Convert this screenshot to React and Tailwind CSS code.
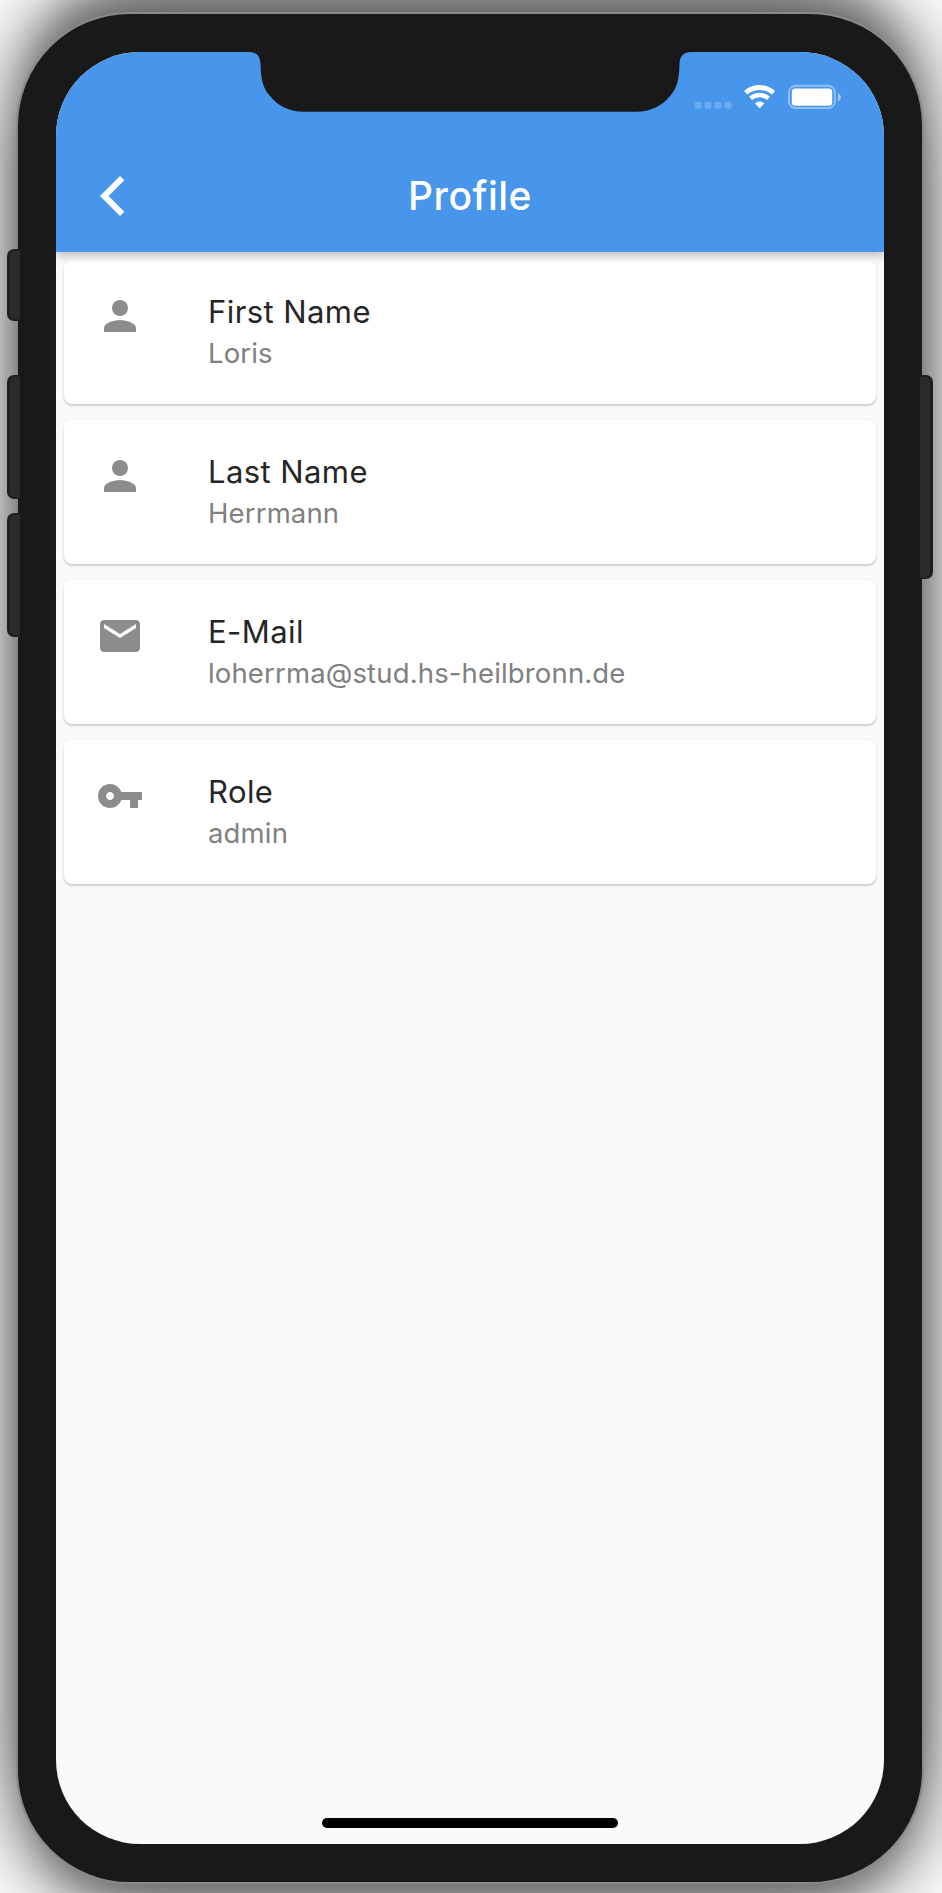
import React from "react";

const rows = [
  { icon: "person", title: "First Name", value: "Loris" },
  { icon: "person", title: "Last Name", value: "Herrmann" },
  { icon: "mail", title: "E-Mail", value: "loherrma@stud.hs-heilbronn.de" },
  { icon: "key", title: "Role", value: "admin" },
];

const paths = {
  person:
    "M12 12c2.21 0 4-1.79 4-4s-1.79-4-4-4-4 1.79-4 4 1.79 4 4 4zm0 2c-2.67 0-8 1.34-8 4v2h16v-2c0-2.66-5.33-4-8-4z",
  mail: "M20 4H4c-1.1 0-1.99.9-1.99 2L2 18c0 1.1.9 2 2 2h16c1.1 0 2-.9 2-2V6c0-1.1-.9-2-2-2zm0 4l-8 5-8-5V6l8 5 8-5v2z",
  key: "M12.65 10C11.83 7.67 9.61 6 7 6c-3.31 0-6 2.69-6 6s2.69 6 6 6c2.61 0 4.83-1.67 5.65-4H17v4h4v-4h2v-4H12.65zM7 14c-1.1 0-2-.9-2-2s.9-2 2-2 2 .9 2 2-.9 2-2 2z",
};

function Row({ icon, title, value }) {
  return (
    <li className="flex h-36 gap-16 rounded-lg bg-white pl-8 pt-8 shadow-[0_2px_2px_rgba(0,0,0,0.16),0_0_2px_rgba(0,0,0,0.10)]">
      <svg viewBox="0 0 24 24" className="h-12 w-12 fill-[#8c8c8c]">
        <path d={paths[icon]} />
      </svg>
      <div className="-mt-px flex flex-col">
        <span className="text-[31px] leading-[42px] tracking-[0.42px] text-[#262626]">{title}</span>
        <span className="text-[27.5px] leading-[41px] tracking-[0.15px] text-[#808080]">{value}</span>
      </div>
    </li>
  );
}

function Notch() {
  return (
    <svg viewBox="0 0 444 60" className="h-[60px] w-[444px] shrink-0 fill-[#191919]">
      <path d="M0 0 C9 0 12 4 12.500 12 C12.800 28 15 36 22 44 C30 54 41 59.700 56 59.700 H388 C403 59.700 414 54 422 44 C429 36 431.200 28 431.500 12 C432 4 435 0 444 0 Z" />
    </svg>
  );
}

function StatusIcons() {
  return (
    <svg viewBox="0 0 160 40" className="mt-6 h-10 w-40 shrink-0">
      <g fill="#fff" fillOpacity="0.2">
        <rect x="2.600" y="25.700" width="6.800" height="7" rx="2" />
        <rect x="12.600" y="25.700" width="6.800" height="7" rx="2" />
        <rect x="22.600" y="25.700" width="6.800" height="7" rx="2" />
        <rect x="32.600" y="25.700" width="6.800" height="7" rx="2" />
      </g>
      <g fill="none" stroke="#fff">
        <path d="M53.600 16.700 A21.500 21.500 0 0 1 81.600 16.700" strokeWidth="4.800" />
        <path d="M58.600 22.300 A14 14 0 0 1 76.600 22.300" strokeWidth="4.400" />
      </g>
      <path d="M63.400 27.400 A7.200 7.200 0 0 1 71.800 27.400 L67.600 32 Z" fill="#fff" stroke="#fff" strokeLinejoin="round" />
      <rect x="97" y="9.700" width="45.800" height="22.300" rx="6.500" fill="none" stroke="#fff" strokeOpacity="0.4" strokeWidth="2" />
      <rect x="99.800" y="12.400" width="40.400" height="17.300" rx="3.500" fill="#fff" />
      <path d="M146 17 Q148.800 18.500 148.800 21.200 Q148.800 24 146 25.300 Z" fill="#fff" fillOpacity="0.5" />
    </svg>
  );
}

export default function App() {
  return (
    <div className="flex h-[1893px] w-[942px] items-start overflow-hidden bg-white pl-[7px] pt-3 font-['Inter','Liberation_Sans',sans-serif]">
      <div className="z-10 -mr-1 flex w-[13px] shrink-0 flex-col pt-[237px]">
        <div className="h-[72px] rounded-l-[7px] border-y-2 border-l-[3px] border-[#1f1f1f] bg-[#2b2b2b]" />
        <div className="mt-[54px] h-[124px] rounded-l-[7px] border-y-2 border-l-[3px] border-[#1f1f1f] bg-[#2b2b2b]" />
        <div className="mt-3.5 h-[124px] rounded-l-[7px] border-y-2 border-l-[3px] border-[#1f1f1f] bg-[#2b2b2b]" />
      </div>
      <div className="h-[1872px] w-[908px] shrink-0 rounded-[114px] border-2 border-[#8a8a8a] bg-[#191919] p-[38px] shadow-[0_0_100px_rgba(0,0,0,0.66),0_-44px_44px_-14px_rgba(0,0,0,0.38),0_36px_44px_-14px_rgba(0,0,0,0.36)]">
        <div className="flex h-[1792px] w-[828px] flex-col overflow-hidden rounded-[84px] bg-[#fafafa]">
          <header className="z-10 flex h-[200px] shrink-0 flex-col justify-between bg-[#4896ec] shadow-[0_4px_8px_rgba(0,0,0,0.24)]">
            <div className="flex h-[88px] items-start pl-48">
              <Notch />
              <StatusIcons />
            </div>
            <div className="grid h-28 grid-cols-3 items-center">
              <svg viewBox="0 0 25 40" className="ml-11 h-10 w-[25px] fill-white">
                <path d="M20 0 L24.300 4.300 L8.600 20 L24.300 35.700 L20 40 L0 20 Z" />
              </svg>
              <h1 className="text-center text-[39px] font-medium tracking-[0.5px] text-white">Profile</h1>
            </div>
          </header>
          <main className="flex flex-1 flex-col px-2 pt-2">
            <ul className="flex flex-col gap-4">
              {rows.map((row) => (
                <Row key={row.title} {...row} />
              ))}
            </ul>
          </main>
          <div className="mb-4 h-2.5 w-[296px] self-center rounded-full bg-black" />
        </div>
      </div>
      <div className="z-10 -ml-1 flex w-[13px] shrink-0 flex-col pt-[363px]">
        <div className="h-[204px] rounded-r-[7px] border-y-2 border-r-[3px] border-[#1f1f1f] bg-[#2b2b2b]" />
      </div>
    </div>
  );
}
